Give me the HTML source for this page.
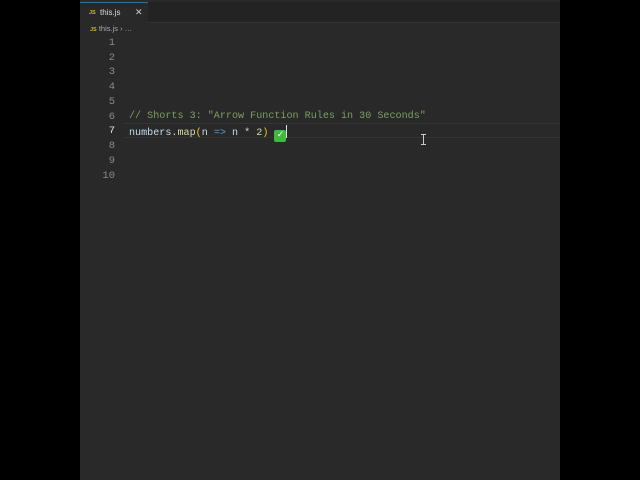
<!DOCTYPE html>
<html><head><meta charset="utf-8"><style>
*{margin:0;padding:0;box-sizing:border-box}
body{width:640px;height:480px;background:#000;position:relative;overflow:hidden;font-family:"Liberation Mono",monospace}
#ed{position:absolute;left:80px;top:0;width:480px;height:480px;background:#292929}
#tabs{position:absolute;left:0;top:2px;width:480px;height:21px;background:#232323;border-bottom:1px solid #333}
#tab{position:absolute;left:0;top:0;width:68px;height:21px;background:#292929;border-top:1px solid #3a6f8f;font-family:"Liberation Sans",sans-serif;font-size:8px;color:#ddd}
.js{color:#c8b838;font-size:5.5px;font-weight:bold}
#bc{position:absolute;left:10px;top:24px;font-family:"Liberation Sans",sans-serif;font-size:7.5px;color:#aaa}
.ln{position:absolute;left:0;width:35px;text-align:right;font-size:10.5px;color:#8a8a8a}
.code{position:absolute;left:49px;font-size:10.1px;white-space:pre;color:#d4d4d4}
#hl{position:absolute;left:44px;top:123px;width:436px;height:15px;border-top:1px solid #353535;border-bottom:1px solid #353535}
</style></head><body>
<div id="ed">
<div id="tabs"><div id="tab"><span class="js" style="position:absolute;left:9px;top:7px">JS</span><span style="position:absolute;left:20px;top:5px">this.js</span><span style="position:absolute;left:55px;top:4px;font-size:9px;color:#ccc">✕</span></div></div>
<div id="bc"><span class="js">JS</span> this.js › …</div>
<div id="hl"></div>
<div class="ln" style="top:37px">1</div>
<div class="ln" style="top:52px">2</div>
<div class="ln" style="top:66px">3</div>
<div class="ln" style="top:81px">4</div>
<div class="ln" style="top:96px">5</div>
<div class="ln" style="top:111px">6</div>
<div class="ln" style="top:125px;color:#e0e0e0">7</div>
<div class="ln" style="top:140px">8</div>
<div class="ln" style="top:155px">9</div>
<div class="ln" style="top:170px">10</div>
<div class="code" style="top:111px;color:#7d9f63">// Shorts 3: "Arrow Function Rules in 30 Seconds"</div>
<div class="code" style="top:125px"><span style="color:#c4dff0">numbers</span>.<span style="color:#dcdcaa">map</span><span style="color:#e8c62f">(</span><span style="color:#c4dff0">n</span> <span style="color:#569cd6">=&gt;</span> <span style="color:#c4dff0">n</span> * <span style="color:#d8d8b0">2</span><span style="color:#e8c62f">)</span> <span style="display:inline-block;width:12px;height:12px;background:#3fb93f;border-radius:2px;color:#fff;font-size:10px;font-weight:bold;line-height:12px;text-align:center;vertical-align:-2px">✓</span><span style="display:inline-block;width:1px;height:13px;background:#ddd;vertical-align:-3px"></span></div>
<div style="position:absolute;left:343px;top:134px;width:5px;height:11px;border-left:1px solid #ccc;">
<div style="position:absolute;left:-3px;top:0;width:5px;height:1px;background:#ccc"></div><div style="position:absolute;left:-3px;top:10px;width:5px;height:1px;background:#ccc"></div></div>
</div>
</body></html>
